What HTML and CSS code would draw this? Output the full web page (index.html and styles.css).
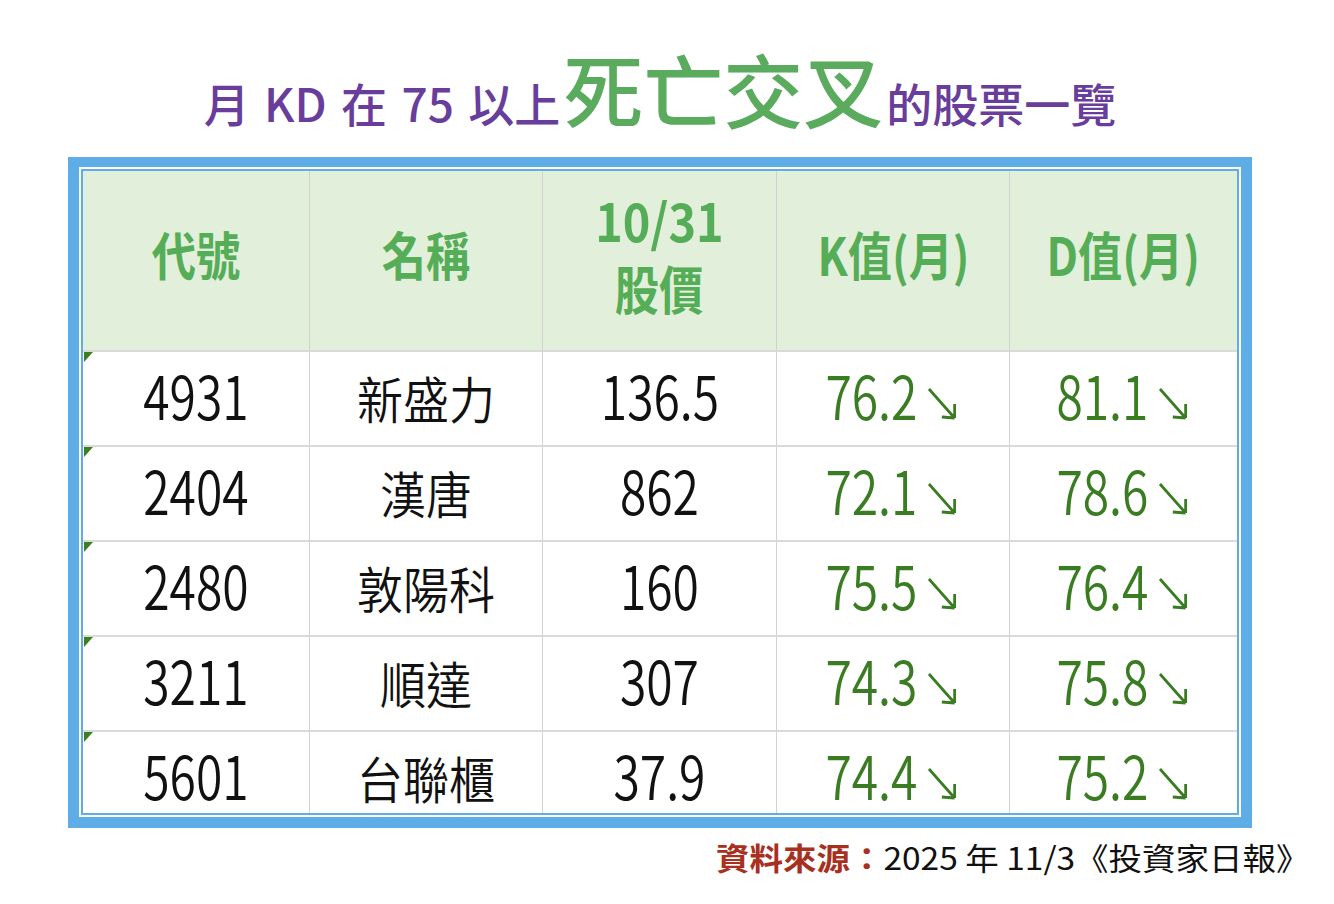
FILE: index.html
```html
<!DOCTYPE html>
<html lang="zh-Hant">
<head>
<meta charset="utf-8">
<title>月 KD 在 75 以上死亡交叉的股票一覽</title>
<link rel="stylesheet" href="styles.css">
</head>
<body>
<div class="title">
  <span class="t-sm">月 KD 在 75 以上</span><span class="t-big">死亡交叉</span><span class="t-sm">的股票一覽</span>
</div>
<div class="frame">
  <div class="inner">
    <div class="grid">
      <div class="c h"><span class="hv">代號</span></div>
      <div class="c h"><span class="hv">名稱</span></div>
      <div class="c h h2"><span class="dt">10/31</span><span class="hv">股價</span></div>
      <div class="c h"><span class="hv">K值(月)</span></div>
      <div class="c h"><span class="hv">D值(月)</span></div>

      <div class="c d first"><span class="v">4931</span></div>
      <div class="c nm"><span class="nv">新盛力</span></div>
      <div class="c d"><span class="v">136.5</span></div>
      <div class="c d g"><span class="v">76.2<svg class="arr" viewBox="0 0 30 33" preserveAspectRatio="none"><path d="M2 2 L28 31 M28 31 L28 17 M28 31 L15 30"/></svg></span></div>
      <div class="c d g"><span class="v">81.1<svg class="arr" viewBox="0 0 30 33" preserveAspectRatio="none"><path d="M2 2 L28 31 M28 31 L28 17 M28 31 L15 30"/></svg></span></div>

      <div class="c d first"><span class="v">2404</span></div>
      <div class="c nm"><span class="nv">漢唐</span></div>
      <div class="c d"><span class="v">862</span></div>
      <div class="c d g"><span class="v">72.1<svg class="arr" viewBox="0 0 30 33" preserveAspectRatio="none"><path d="M2 2 L28 31 M28 31 L28 17 M28 31 L15 30"/></svg></span></div>
      <div class="c d g"><span class="v">78.6<svg class="arr" viewBox="0 0 30 33" preserveAspectRatio="none"><path d="M2 2 L28 31 M28 31 L28 17 M28 31 L15 30"/></svg></span></div>

      <div class="c d first"><span class="v">2480</span></div>
      <div class="c nm"><span class="nv">敦陽科</span></div>
      <div class="c d"><span class="v">160</span></div>
      <div class="c d g"><span class="v">75.5<svg class="arr" viewBox="0 0 30 33" preserveAspectRatio="none"><path d="M2 2 L28 31 M28 31 L28 17 M28 31 L15 30"/></svg></span></div>
      <div class="c d g"><span class="v">76.4<svg class="arr" viewBox="0 0 30 33" preserveAspectRatio="none"><path d="M2 2 L28 31 M28 31 L28 17 M28 31 L15 30"/></svg></span></div>

      <div class="c d first"><span class="v">3211</span></div>
      <div class="c nm"><span class="nv">順達</span></div>
      <div class="c d"><span class="v">307</span></div>
      <div class="c d g"><span class="v">74.3<svg class="arr" viewBox="0 0 30 33" preserveAspectRatio="none"><path d="M2 2 L28 31 M28 31 L28 17 M28 31 L15 30"/></svg></span></div>
      <div class="c d g"><span class="v">75.8<svg class="arr" viewBox="0 0 30 33" preserveAspectRatio="none"><path d="M2 2 L28 31 M28 31 L28 17 M28 31 L15 30"/></svg></span></div>

      <div class="c d first last"><span class="v">5601</span></div>
      <div class="c nm last"><span class="nv">台聯櫃</span></div>
      <div class="c d last"><span class="v">37.9</span></div>
      <div class="c d g last"><span class="v">74.4<svg class="arr" viewBox="0 0 30 33" preserveAspectRatio="none"><path d="M2 2 L28 31 M28 31 L28 17 M28 31 L15 30"/></svg></span></div>
      <div class="c d g last"><span class="v">75.2<svg class="arr" viewBox="0 0 30 33" preserveAspectRatio="none"><path d="M2 2 L28 31 M28 31 L28 17 M28 31 L15 30"/></svg></span></div>
    </div>
  </div>
</div>
<div class="source"><span class="src-text"><span class="src-label">資料來源：</span>2025 年 11/3《投資家日報》</span></div>
</body>
</html>
```

FILE: styles.css
```css
html, body {
  margin: 0;
  padding: 0;
  background: #ffffff;
}
body {
  font-family: "Noto Sans CJK TC", "Noto Sans", sans-serif;
  width: 1334px;
  height: 904px;
  overflow: hidden;
}
.title {
  margin-left: 68px;
  width: 1184px;
  height: 157px;
  box-sizing: border-box;
  padding-top: 47px;
  display: flex;
  justify-content: center;
  align-items: baseline;
  line-height: 1;
  white-space: nowrap;
}
.t-sm {
  font-size: 46px;
  color: #683d9b;
  font-weight: 500;
  word-spacing: 4px;
}
.t-big {
  font-size: 80px;
  color: #5aab5e;
  font-weight: 500;
  margin: 0 3px;
}
.frame {
  margin-left: 68px;
  width: 1184px;
  box-sizing: border-box;
  border: 11px solid #5fade6;
  border-top-width: 10px;
  padding: 2px;
  background: #ffffff;
}
.inner {
  border: 2px solid #5fade6;
}
.grid {
  display: grid;
  grid-template-columns: 227px 233px 234px 233px 227px;
  grid-template-rows: 181px repeat(4, 95px) 81px;
  height: 642px;
}
.c {
  position: relative;
  box-sizing: border-box;
  border-right: 1px solid #d2d2d2;
  border-bottom: 2px solid #dadada;
  display: flex;
  align-items: flex-start;
  justify-content: center;
  line-height: 1;
  white-space: nowrap;
}
.c:nth-child(5n) {
  border-right: none;
}
.c.last {
  border-bottom: none;
}
.h {
  background: #e2efda;
  color: #56ad57;
  font-weight: 700;
  font-size: 52px;
  align-items: center;
  padding-bottom: 13px;
}
.hv {
  display: inline-block;
  transform: scaleX(0.85);
}
.h2 {
  flex-direction: column;
  gap: 16px;
}
.dt {
  display: inline-block;
  transform: scaleX(0.9);
}
.d {
  font-size: 60px;
  font-weight: 350;
  color: #111111;
  padding-top: 12px;
}
.d .v {
  display: inline-block;
  transform: scaleX(0.8);
}
.g {
  color: #3a7c22;
}
.g .v {
  margin-left: -4px;
}
.nm {
  font-size: 50px;
  font-weight: 350;
  color: #111111;
  padding-top: 20px;
}
.nv {
  display: inline-block;
  transform: scaleX(0.92);
}
.arr {
  width: 37px;
  height: 33px;
  margin-left: 12px;
  vertical-align: baseline;
  fill: none;
  stroke: #3a7c22;
  stroke-width: 2.8;
}
.first::before {
  content: "";
  position: absolute;
  left: 1px;
  top: 0;
  border-top: 10px solid #3d7e22;
  border-right: 9px solid transparent;
}
.source {
  margin-top: 13px;
  padding-right: 25px;
  text-align: right;
  font-size: 31px;
  line-height: 1;
  color: #111111;
  white-space: nowrap;
}
.src-text {
  display: inline-block;
  transform: scaleX(1.08);
  transform-origin: right center;
}
.src-label {
  color: #a8301f;
  font-weight: 700;
}
```
